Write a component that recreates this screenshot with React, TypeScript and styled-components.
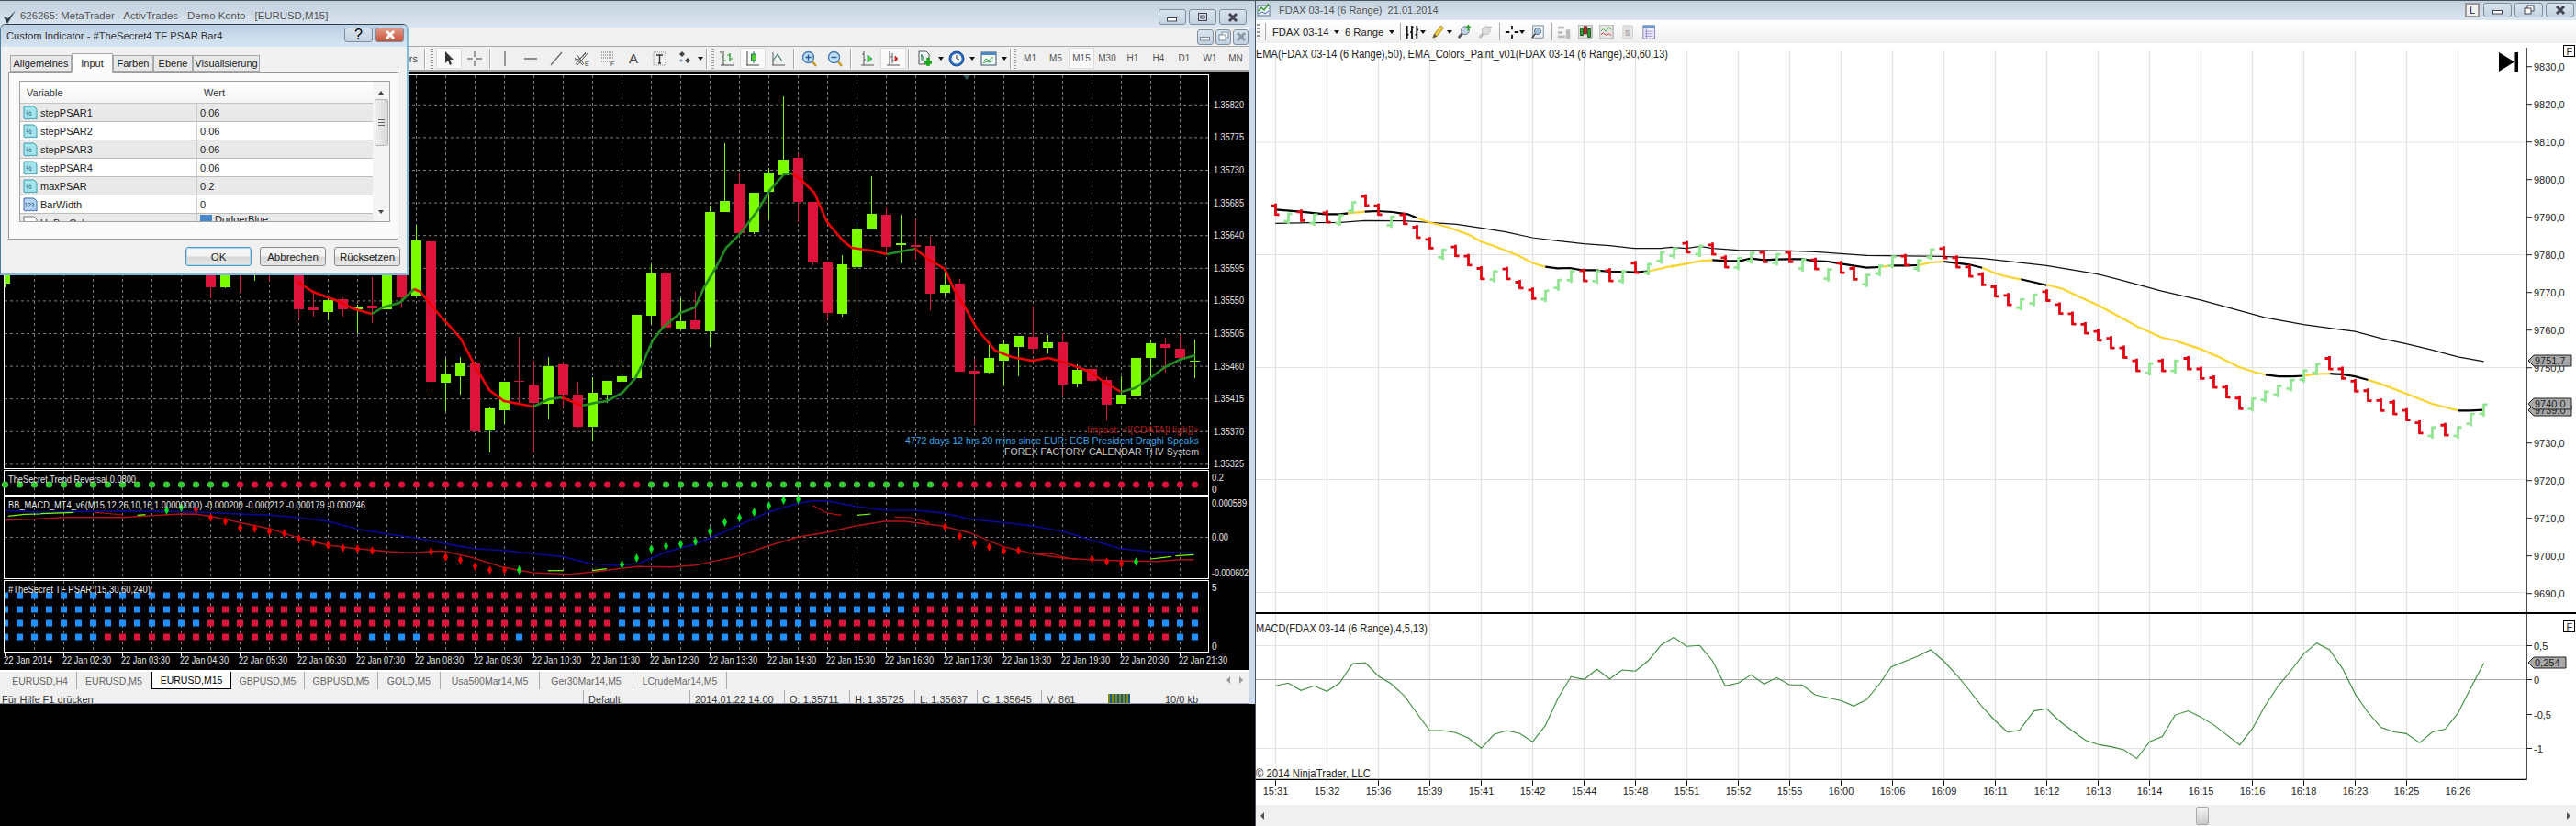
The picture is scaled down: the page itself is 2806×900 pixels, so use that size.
import React from 'react';
import styled, { createGlobalStyle } from 'styled-components';

const GlobalStyle = createGlobalStyle`
  html, body { margin: 0; padding: 0; background: #000; }
  body { font-family: "Liberation Sans", Arial, sans-serif; width: 2806px; height: 900px; overflow: hidden; }
  * { box-sizing: border-box; }
`;

type Pt = [number, number];

// point lists were read off crops of the chart, so they are rescaled to page pixels here
const fromCrop = (pts: number[][], x0: number, y0: number, sx: number, sy: number): Pt[] =>
  pts.map(([x, y]) => [x0 + x / sx, y0 + y / sy]);
const toPoints = (pts: Pt[]) => pts.map(([x, y]) => `${x.toFixed(1)},${y.toFixed(1)}`).join(' ');

/* ---------- layout ---------- */

const Page = styled.div`
  display: flex;
  width: 2806px;
  height: 900px;
  background: #000;
`;

const LeftColumn = styled.div`
  position: relative;
  width: 1367px;
  height: 900px;
  flex: none;
`;

const MetaWindow = styled.div`
  display: flex;
  flex-direction: column;
  height: 767px;
  overflow: hidden;
`;

const TitleBar = styled.div<{ $h: number }>`
  display: flex;
  flex: none;
  height: ${(p) => p.$h}px;
  align-items: flex-start;
  border-top: 1px solid #46525e;
  background: linear-gradient(#c2d0de, #dbe6f0);
`;

const TitleText = styled.span`
  color: #555;
  white-space: pre;
`;

const MetaTitle = styled(TitleText)`
  margin: 10px auto 0 4px;
  font-size: 11.4px;
`;

const NinjaTitle = styled(TitleText)`
  margin: 4px auto 0 9px;
  font-size: 11px;
`;

const AppIcon = styled.svg<{ $m: string }>`
  flex: none;
  margin: ${(p) => p.$m};
`;

const CaptionRow = styled.div<{ $m: string }>`
  display: flex;
  gap: 3px;
  margin: ${(p) => p.$m};
`;

const CaptionButton = styled.div<{ $w: number; $h: number; $c?: string }>`
  display: flex;
  width: ${(p) => p.$w}px;
  height: ${(p) => p.$h}px;
  align-items: center;
  justify-content: center;
  border: 1px solid #7f8e9e;
  border-radius: 3px;
  background: ${(p) => p.$c || 'linear-gradient(#d8e3ee, #c3d2e0)'};
`;

const LockBox = styled.div`
  display: flex;
  width: 16px;
  height: 16px;
  margin-right: 1px;
  align-items: center;
  justify-content: center;
  border: 2px solid #999;
  background: #f0f0f0;
  color: #222;
  font-size: 11px;
`;

const MetaBody = styled.div`
  display: flex;
  flex: 1;
  min-height: 0;
  flex-direction: column;
  border-right: 7px solid #cddcec;
`;

const MenuRow = styled.div`
  display: flex;
  flex: none;
  height: 21px;
  justify-content: flex-end;
  align-items: center;
  gap: 2px;
  background: #f0f0f0;
  border-bottom: 1px solid #a8a8a8;
`;

const MetaToolbar = styled.div`
  display: flex;
  flex: none;
  height: 27px;
  align-items: center;
  padding-left: 398px;
  background: #f0f0f0;
  border-bottom: 2px solid #a0a0a0;
`;

const CutLabel = styled.span`
  width: 60px;
  color: #444;
  font-size: 11px;
  text-align: right;
`;

const ToolSep = styled.i<{ $ml?: number; $mr?: number }>`
  flex: none;
  width: 2px;
  height: 22px;
  margin: 0 ${(p) => p.$mr ?? 1}px 0 ${(p) => p.$ml ?? 2}px;
  border-left: 1px solid #a8a8a8;
  border-right: 1px solid #fff;
`;

const Grip = styled.i<{ $ml?: number; $mr?: number }>`
  flex: none;
  width: 3px;
  height: 22px;
  margin: 0 ${(p) => p.$mr ?? 3}px 0 ${(p) => p.$ml ?? 3}px;
  background: repeating-linear-gradient(#999 0 1px, transparent 1px 3px);
`;

const ToolButton = styled.div<{ $on?: boolean; $w?: number }>`
  display: flex;
  flex: none;
  width: ${(p) => p.$w ?? 28}px;
  height: 23px;
  align-items: center;
  justify-content: center;
  border: 1px solid ${(p) => (p.$on ? '#ddd' : 'transparent')};
  background: ${(p) => (p.$on ? '#fafafa' : 'transparent')};
`;

const Timeframe = styled(ToolButton)`
  color: #555;
  font-size: 10px;
`;

const LetterTool = styled.span`
  color: #444;
  font-size: 15px;
`;

const Caret = styled.i<{ $ml?: number }>`
  flex: none;
  width: 0;
  height: 0;
  margin-left: ${(p) => p.$ml ?? 0}px;
  border-top: 4px solid #111;
  border-left: 3.5px solid transparent;
  border-right: 3.5px solid transparent;
`;

/* ---------- MetaTrader chart ---------- */

const ChartArea = styled.div`
  display: flex;
  flex: none;
  height: 652px;
  flex-direction: column;
  padding: 3px 0 0 4px;
  background: #000;
  overflow: hidden;
`;

const PaneFrame = styled.div<{ $h: number; $mt?: number }>`
  flex: none;
  width: 1313px;
  height: ${(p) => p.$h}px;
  margin-top: ${(p) => p.$mt ?? 0}px;
  border: 1px solid #fff;
`;

const PaneSvg = styled.svg`
  display: block;
  overflow: visible;
`;

const AxisSvg = styled.svg`
  display: block;
  flex: none;
`;

const ScaleText = styled.text.attrs({ lengthAdjust: 'spacingAndGlyphs' })`
  fill: #e8e8e8;
  font-family: "Liberation Sans", Arial, sans-serif;
  font-size: 10px;
`;

const PaneLabel = styled(ScaleText)`
  font-size: 11px;
`;

const NewsText = styled.text.attrs({ lengthAdjust: 'spacingAndGlyphs', textAnchor: 'end' })<{ $c: string }>`
  fill: ${(p) => p.$c};
  font-family: "Liberation Sans", Arial, sans-serif;
  font-size: 11.5px;
`;

/* ---------- symbol tabs + status bar ---------- */

const TabRow = styled.div`
  display: flex;
  flex: none;
  height: 22px;
  padding-left: 4px;
  align-items: flex-start;
  border-top: 2px solid #fff;
  background: #f0f0f0;
`;

const SymbolTab = styled.div<{ $w: number; $on?: boolean }>`
  display: flex;
  flex: none;
  width: ${(p) => p.$w}px;
  height: 19px;
  align-items: center;
  justify-content: center;
  color: ${(p) => (p.$on ? '#000' : '#666')};
  font-size: 10.5px;
  background: ${(p) => (p.$on ? '#fff' : 'transparent')};
  border-right: 1px solid ${(p) => (p.$on ? '#000' : '#aaa')};
  border-left: ${(p) => (p.$on ? '1px solid #000' : '0')};
  border-bottom: ${(p) => (p.$on ? '1px solid #000' : '0')};
`;

const TabArrows = styled.div`
  display: flex;
  gap: 10px;
  margin: 5px 6px 0 auto;
`;

const TabArrow = styled.i<{ $left?: boolean }>`
  width: 0;
  height: 0;
  border-top: 4px solid transparent;
  border-bottom: 4px solid transparent;
  ${(p) => (p.$left ? 'border-right: 4px solid #999;' : 'border-left: 4px solid #999;')}
`;

const StatusBar = styled.div`
  display: flex;
  flex: 1;
  min-height: 0;
  background: #f0f0f0;
  border-bottom: 1px solid #8a96a3;
  overflow: hidden;
`;

const StatusCell = styled.div<{ $w: number; $first?: boolean }>`
  display: flex;
  flex: none;
  width: ${(p) => p.$w}px;
  gap: 38px;
  padding: 4px 0 0 ${(p) => (p.$first ? 2 : 5)}px;
  color: #333;
  font-size: 11px;
  white-space: nowrap;
  border-left: ${(p) => (p.$first ? '0' : '1px solid #aaa')};
`;

const ConnectionBars = styled.i`
  width: 24px;
  height: 10px;
  background: repeating-linear-gradient(90deg, #7d8b1d 0 2px, #1d5b7d 2px 4px);
`;

/* ---------- indicator dialog ---------- */

const Dialog = styled.div`
  position: absolute;
  left: 0;
  top: 26px;
  display: flex;
  width: 445px;
  height: 274px;
  flex-direction: column;
  border: 1px solid #4f7c9c;
  border-top-color: #2d3e4d;
  border-bottom: 2px solid #7fbad8;
  border-right: 2px solid #7fbad8;
  border-radius: 6px 6px 0 0;
  background: #f0f0f0;
  overflow: hidden;
`;

const DialogTitle = styled.div`
  display: flex;
  flex: none;
  height: 24px;
  align-items: flex-start;
  padding: 3px 3px 0 6px;
  background: linear-gradient(#bcd0e4, #d7e5f1);
`;

const DialogTitleText = styled.span`
  margin: 3px auto 0 0;
  color: #333;
  font-size: 11.2px;
`;

const TabStrip = styled.div`
  display: flex;
  flex: none;
  height: 27px;
  padding: 7px 0 0 10px;
  align-items: flex-end;
`;

const DialogTab = styled.div<{ $w: number; $on?: boolean }>`
  display: flex;
  flex: none;
  width: ${(p) => p.$w}px;
  height: ${(p) => (p.$on ? 21 : 18)}px;
  margin-bottom: ${(p) => (p.$on ? -1 : 0)}px;
  align-items: center;
  justify-content: center;
  color: #222;
  font-size: 11px;
  background: ${(p) => (p.$on ? '#fbfbfb' : '#e8e8e8')};
  border: 1px solid #a8a8a8;
  border-bottom-color: ${(p) => (p.$on ? '#fbfbfb' : '#a8a8a8')};
  z-index: ${(p) => (p.$on ? 1 : 0)};
`;

const TabPanel = styled.div`
  flex: none;
  width: 425px;
  height: 183px;
  margin-left: 8px;
  padding: 9px 8px 0 11px;
  background: #fafafa;
  border: 1px solid #9a9a9a;
`;

const ListBox = styled.div`
  position: relative;
  width: 404px;
  height: 154px;
  background: #fff;
  border: 1px solid #a0a0a0;
  overflow: hidden;
`;

const ListHeader = styled.div`
  display: flex;
  height: 24px;
  align-items: center;
  color: #333;
  font-size: 11px;
  background: linear-gradient(#fff, #f4f4f4);
  border-bottom: 1px solid #c4c4c4;
`;

const HeaderCell = styled.span<{ $w?: number }>`
  width: ${(p) => p.$w ?? 180}px;
  padding-left: 7px;
`;

const ListRow = styled.div<{ $alt?: boolean }>`
  display: flex;
  height: 20px;
  width: 385px;
  align-items: center;
  color: #222;
  font-size: 11px;
  background: ${(p) => (p.$alt ? '#e9e9e9' : '#fff')};
  border-bottom: 1px solid #bdbdbd;
`;

const CutRow = styled(ListRow)`
  align-items: flex-start;
  padding-top: 0;
`;

const VarCell = styled.div`
  display: flex;
  width: 193px;
  height: 100%;
  align-items: center;
  gap: 3px;
  padding-left: 3px;
  border-right: 1px solid #ccc;
`;

const ValueCell = styled.div`
  display: flex;
  align-items: center;
  gap: 3px;
  padding-left: 3px;
`;

const Swatch = styled.i`
  width: 13px;
  height: 10px;
  background: #4a86c8;
`;

const ScrollTrack = styled.div`
  position: absolute;
  right: 0;
  top: 0;
  display: flex;
  width: 18px;
  height: 100%;
  flex-direction: column;
  align-items: center;
  background: #f4f4f4;
`;

const ScrollUp = styled.i`
  margin-top: 10px;
  border-bottom: 4px solid #444;
  border-left: 3.5px solid transparent;
  border-right: 3.5px solid transparent;
`;

const ScrollThumb = styled.div`
  display: flex;
  width: 15px;
  height: 51px;
  margin-top: 5px;
  align-items: center;
  justify-content: center;
  background: linear-gradient(90deg, #eee, #d8d8d8);
  border: 1px solid #b4b4b4;
  border-radius: 2px;
`;

const ThumbLines = styled.i`
  width: 7px;
  height: 7px;
  background: repeating-linear-gradient(#666 0 1px, transparent 1px 3px);
`;

const ScrollDown = styled.i`
  margin-top: auto;
  margin-bottom: 8px;
  border-top: 4px solid #444;
  border-left: 3.5px solid transparent;
  border-right: 3.5px solid transparent;
`;

const DialogActions = styled.div`
  display: flex;
  justify-content: flex-end;
  gap: 9px;
  margin-top: 8px;
  padding-right: 7px;
`;

const DialogButton = styled.div<{ $primary?: boolean }>`
  display: flex;
  width: 72px;
  height: 21px;
  align-items: center;
  justify-content: center;
  color: #222;
  font-size: 11.5px;
  border: 1px solid ${(p) => (p.$primary ? '#4a9ac8' : '#8a8a8a')};
  box-shadow: ${(p) => (p.$primary ? 'inset 0 0 0 1px #a9dcf2' : 'none')};
  border-radius: 3px;
  background: linear-gradient(#f4f4f4 45%, #d8d8d8 55%, #e6e6e6);
`;

/* ---------- NinjaTrader window ---------- */

const NinjaWindow = styled.div`
  display: flex;
  flex: none;
  width: 1439px;
  height: 900px;
  flex-direction: column;
  background: #fff;
  border-left: 1px solid #48525c;
`;

const NinjaToolbar = styled.div`
  display: flex;
  flex: none;
  height: 25px;
  align-items: center;
  background: linear-gradient(#fff, #eeeeee);
`;

const Slot = styled.div<{ $ml: number; $w: number }>`
  display: flex;
  flex: none;
  width: ${(p) => p.$w}px;
  margin-left: ${(p) => p.$ml}px;
  align-items: center;
  color: #222;
  font-size: 11.2px;
  white-space: nowrap;
`;

const ThinSep = styled(Slot)`
  height: 19px;
  background: #aaa;
`;

const SmallGrip = styled(Slot)`
  height: 17px;
  background: repeating-linear-gradient(#999 0 2px, transparent 2px 4px);
`;

const NinjaPane = styled.div<{ $h: number; $top?: boolean }>`
  flex: none;
  height: ${(p) => p.$h}px;
  border-top: ${(p) => (p.$top ? '2px solid #000' : '0')};
`;

const NinjaSvg = styled.svg`
  display: block;
`;

const ScrollBar = styled.div`
  display: flex;
  flex: 1;
  align-items: center;
  background: #f0f0f0;
`;

const BarArrow = styled.i<{ $left?: boolean }>`
  width: 0;
  height: 0;
  margin: ${(p) => (p.$left ? '0 0 0 5px' : '0 6px 0 0')};
  border-top: 4px solid transparent;
  border-bottom: 4px solid transparent;
  ${(p) => (p.$left ? 'border-right: 4px solid #555;' : 'border-left: 4px solid #555;')}
`;

const BarThumb = styled.div`
  width: 14px;
  height: 20px;
  margin: 0 auto 0 1015px;
  background: linear-gradient(#f2f2f2, #c8c8c8);
  border: 1px solid #aaa;
  border-radius: 2px;
`;

const NinjaText = styled.text`
  fill: #222;
  font-family: "Liberation Sans", Arial, sans-serif;
  font-size: 11px;
`;

const NinjaLabel = styled(NinjaText).attrs({ lengthAdjust: 'spacingAndGlyphs' })`
  font-size: 12px;
`;

/* ---------- candle chart data ---------- */

const candleX = (k: number) => 5.5 + 16 * k;

// k, wick top, body top, body bottom, wick bottom, bull?
const candles: [number, number, number, number, number, number][] = [
  [0, 290, 290, 309, 313, 1], [14, 290, 290, 313, 325, 0], [15, 290, 290, 313, 314, 1], [16, 290, 290, 291, 318, 0],
  [17, 290, 290, 291, 306, 1], [18, 290, 290, 291, 306, 0], [20, 290, 290, 337, 347, 0], [21, 318, 335, 338, 345, 0],
  [22, 322, 327, 340, 349, 1], [23, 324, 326, 337, 345, 0], [24, 332, 334, 337, 363, 1], [25, 302, 333, 336, 352, 0],
  [26, 290, 290, 337, 337, 1], [27, 290, 290, 324, 335, 0], [28, 245, 262, 323, 323, 1], [29, 263, 263, 416, 427, 0],
  [30, 391, 408, 417, 448, 1], [31, 389, 396, 410, 430, 1], [32, 396, 396, 470, 470, 0], [33, 443, 445, 469, 493, 1],
  [34, 416, 416, 447, 462, 1], [35, 367, 415, 416, 440, 0], [36, 393, 420, 439, 492, 0], [37, 389, 399, 440, 457, 1],
  [38, 394, 397, 430, 443, 0], [39, 416, 430, 465, 466, 0], [40, 411, 428, 465, 481, 1], [41, 415, 415, 430, 439, 1],
  [42, 393, 410, 416, 435, 1], [43, 343, 343, 412, 412, 1], [44, 288, 298, 344, 353, 1], [45, 292, 298, 357, 363, 0],
  [46, 325, 350, 358, 359, 1], [47, 318, 349, 359, 360, 0], [48, 224, 231, 361, 378, 1], [49, 156, 219, 231, 231, 1],
  [50, 189, 200, 254, 254, 0], [51, 210, 210, 253, 255, 1], [52, 183, 188, 209, 239, 1], [53, 105, 174, 191, 191, 1],
  [54, 167, 172, 220, 242, 0], [55, 220, 220, 286, 289, 0], [56, 286, 286, 341, 347, 0], [57, 278, 288, 342, 345, 1],
  [58, 242, 250, 291, 345, 1], [59, 192, 233, 250, 250, 1], [60, 226, 234, 269, 277, 0], [61, 234, 265, 267, 287, 1],
  [62, 239, 267, 269, 283, 0], [63, 258, 268, 320, 338, 0], [64, 292, 310, 319, 322, 1], [65, 304, 309, 405, 405, 0],
  [66, 391, 404, 407, 462, 0], [67, 372, 390, 406, 407, 1], [68, 370, 375, 393, 420, 1], [69, 366, 366, 378, 410, 1],
  [70, 334, 367, 380, 386, 0], [71, 365, 373, 379, 385, 1], [72, 363, 373, 419, 432, 0], [73, 397, 403, 418, 422, 1],
  [74, 395, 402, 415, 425, 0], [75, 411, 414, 441, 458, 0], [76, 410, 430, 440, 440, 1], [77, 390, 390, 431, 431, 1],
  [78, 371, 374, 390, 410, 1], [79, 368, 375, 379, 406, 0], [80, 365, 380, 390, 390, 0], [81, 370, 393, 393.5, 412, 1],
];

const BULL = '#7cfc00';
const BEAR = '#dc143c';

const maSegments: { c: string; pts: Pt[] }[] = [
  { c: '#f00000', pts: [[324, 307], [341, 318], [368, 328], [384, 336], [405, 342]] },
  { c: '#228b22', pts: [[405, 342], [417, 335], [435, 330], [451, 315]] },
  { c: '#f00000', pts: [[451, 315], [458, 318], [475, 339], [502, 369], [518, 400], [533, 425], [549, 437], [581, 443]] },
  { c: '#228b22', pts: [[581, 443], [598, 435], [612, 433]] },
  { c: '#f00000', pts: [[612, 433], [634, 442]] },
  {
    c: '#228b22',
    pts: [[634, 442], [648, 439], [661, 437], [678, 428], [692, 412], [700, 396], [711, 371], [722, 357], [741, 341], [757, 335],
      [767, 313], [779, 293], [791, 270], [806, 255], [827, 227], [838, 208], [854, 190], [863, 189]],
  },
  {
    c: '#f00000',
    pts: [[863, 189], [874, 197], [887, 210], [901, 242], [919, 263], [928, 270], [941, 272], [950, 273], [966, 277]],
  },
  { c: '#228b22', pts: [[966, 277], [997, 271]] },
  {
    c: '#f00000',
    pts: [[997, 271], [1012, 283], [1029, 293], [1039, 315], [1053, 338], [1064, 358], [1084, 382], [1102, 389], [1124, 393],
      [1142, 390], [1160, 395], [1187, 405], [1204, 417], [1221, 427]],
  },
  { c: '#228b22', pts: [[1221, 427], [1236, 423], [1253, 412], [1269, 400], [1285, 392], [1302, 387]] },
];

const blueMacd: Pt[] = [
  ...fromCrop([[12, 172], [100, 178], [200, 175], [300, 173], [400, 175], [500, 178], [570, 182], [660, 187], [730, 195], [800, 207],
    [870, 232], [950, 250], [1010, 260], [1080, 278], [1160, 297], [1230, 302], [1300, 313], [1370, 322], [1440, 345], [1500, 351], [1560, 345]], 0, 500, 2.24, 3),
  ...fromCrop([[0, 340], [55, 308], [125, 283], [165, 262], [235, 220], [305, 178], [380, 148], [415, 140], [450, 140], [520, 158], [590, 170],
    [665, 171], [735, 180], [800, 200], [880, 211], [950, 222], [1025, 240], [1095, 268], [1165, 296], [1240, 306], [1345, 310]], 700, 500, 2.24, 3),
];

const redMacd: Pt[] = [
  ...fromCrop([[12, 203], [80, 200], [155, 194], [300, 194], [370, 188], [440, 183], [480, 184], [520, 192], [590, 212], [660, 232], [730, 262], [800, 285],
    [870, 296], [950, 306], [1000, 310], [1080, 304], [1150, 325], [1230, 358], [1300, 375], [1390, 380], [1450, 372], [1520, 360], [1560, 354]], 0, 500, 2.24, 3),
  ...fromCrop([[0, 355], [70, 356], [130, 350], [235, 320], [305, 288], [380, 258], [450, 243], [520, 222], [590, 207], [640, 207], [730, 222], [800, 245],
    [880, 290], [950, 312], [1030, 328], [1100, 333], [1190, 337], [1260, 338], [1300, 333], [1345, 332]], 700, 500, 2.24, 3),
];

// short crossings of the signal lines: crop pts, colour, crop origin
const macdStubs: { c: string; x0: number; pts: number[][] }[] = [
  { c: '#7cfc00', x0: 0, pts: [[20, 190], [60, 184], [100, 183]] },
  { c: '#7cfc00', x0: 0, pts: [[100, 182], [180, 178]] },
  { c: '#7cfc00', x0: 0, pts: [[335, 187], [355, 185]] },
  { c: '#c01010', x0: 0, pts: [[230, 178], [250, 180], [300, 186]] },
  { c: '#7cfc00', x0: 0, pts: [[1337, 368], [1375, 368]] },
  { c: '#7cfc00', x0: 0, pts: [[1445, 368], [1480, 362]] },
  { c: '#c01010', x0: 700, pts: [[415, 155], [450, 180], [485, 187]] },
  { c: '#7cfc00', x0: 700, pts: [[522, 187], [557, 183]] },
  { c: '#c01010', x0: 700, pts: [[615, 193], [655, 195], [700, 212]] },
  { c: '#c01010', x0: 700, pts: [[955, 313], [1000, 313], [1030, 325], [1060, 332]] },
  { c: '#7cfc00', x0: 700, pts: [[1240, 330], [1290, 322]] },
  { c: '#7cfc00', x0: 700, pts: [[1300, 320], [1345, 316]] },
];

// diamond markers: k, page y, up?
const macdMarks: [number, number, number][] = [
  [11, 557, 1], [12, 554, 1], [13, 556, 0], [14, 565, 0], [15, 569, 0], [16, 576, 0], [17, 577, 0], [18, 580, 0], [19, 582, 0], [20, 588, 0],
  [21, 592, 0], [22, 595, 0], [23, 598, 0], [24, 599, 0], [25, 601, 0], [29, 602, 0], [30, 608, 0], [31, 611, 0], [32, 618, 0], [33, 622, 0], [34, 622, 0],
  [35, 622, 1], [42, 616, 1], [43, 609, 1], [44, 599, 1], [45, 596, 1], [46, 594, 1], [47, 591, 1], [48, 580, 1], [49, 570, 1], [50, 565, 1], [51, 559, 1],
  [52, 552, 1], [53, 546, 1], [54, 545, 1], [64, 575, 0], [65, 585, 0], [66, 593, 0], [67, 597, 0], [68, 601, 0], [69, 601, 0], [74, 610, 0], [75, 613, 0],
  [76, 615, 0], [77, 613, 1],
];

const PSAR_BLUE = '#1e90ff';

// colour runs of each PSAR row: [from, to] are the red columns
const psarRows: { y: number; red: [number, number][] }[] = [
  { y: 650, red: [[26, 41]] },
  { y: 665, red: [[14, 41], [62, 81]] },
  { y: 680, red: [[14, 41], [56, 77]] },
  { y: 695, red: [[7, 24], [29, 34], [36, 41], [55, 69], [75, 79]] },
];

const columns = Array.from({ length: 82 }, (_, k) => k);
const mainPrices = ['1.35820', '1.35775', '1.35730', '1.35685', '1.35640', '1.35595', '1.35550', '1.35505', '1.35460', '1.35415', '1.35370', '1.35325'];
const dateLabels = ['22 Jan 2014', ...Array.from({ length: 20 }, (_, i) => `22 Jan ${String(i + 2).padStart(2, '0')}:30`)];

/* ---------- NinjaTrader chart data ---------- */

const barX = (n: number) => 1389.5 + 14 * n;

const barsA: [string, number, number][] = [
  ['r', 65, 105], ['g', 95, 132], ['r', 85, 125], ['g', 98, 138], ['r', 88, 130], ['g', 100, 138], ['g', 58, 98], ['r', 35, 75], ['r', 65, 105], ['g', 105, 145],
  ['r', 95, 135], ['r', 135, 180], ['r', 175, 215], ['g', 213, 250], ['r', 200, 240], ['r', 230, 270], ['r', 270, 315], ['g', 283, 323], ['r', 272, 315], ['r', 315, 345],
  ['r', 340, 380], ['g', 347, 387], ['g', 312, 350], ['g', 283, 325], ['r', 278, 322], ['g', 283, 328], ['r', 277, 322], ['g', 283, 327], ['r', 253, 295], ['g', 260, 300], ['g', 222, 262],
];
const barsB: [string, number, number][] = [
  ['g', 118, 155], ['r', 98, 138], ['g', 110, 150], ['r', 103, 145], ['r', 145, 187], ['g', 150, 193], ['g', 133, 172], ['r', 128, 170], ['g', 138, 178], ['r', 128, 170],
  ['g', 155, 197], ['r', 152, 193], ['g', 187, 230], ['r', 163, 205], ['r', 180, 227], ['g', 205, 248], ['g', 175, 213], ['g', 145, 187], ['r', 140, 180], ['g', 157, 197],
  ['g', 122, 160], ['r', 115, 157], ['r', 145, 187], ['r', 175, 217], ['r', 200, 245], ['r', 240, 282], ['r', 268, 310],
];
const barsC: [string, number, number][] = [
  ['g', 65, 100], ['g', 52, 88], ['r', 40, 75], ['r', 77, 112], ['r', 103, 142], ['r', 133, 168], ['r', 153, 188], ['r', 173, 210], ['r', 200, 237], ['r', 237, 275],
  ['g', 248, 285], ['r', 237, 275], ['g', 240, 280], ['r', 230, 270], ['r', 260, 297], ['r', 285, 322], ['r', 312, 350], ['r', 343, 383], ['g', 348, 388], ['g', 328, 362],
  ['g', 312, 347], ['g', 295, 330], ['g', 268, 305], ['g', 250, 285], ['r', 230, 270], ['r', 260, 297], ['r', 295, 333], ['r', 322, 360], ['r', 350, 388], ['r', 355, 398],
  ['r', 378, 415], ['r', 413, 452], ['g', 430, 465], ['r', 420, 458], ['g', 430, 465], ['g', 392, 430], ['g', 365, 402],
];

const rangeBars = [
  ...barsA.map(([c, t, b]) => [c, 200 + t / 3, 200 + b / 3] as const),
  ...barsB.map(([c, t, b]) => [c, 230 + t / 3, 230 + b / 3] as const),
  ...barsC.map(([c, t, b]) => [c, 300 + t / 2.613, 300 + b / 2.613] as const),
];

const a = (pts: number[][]) => fromCrop(pts, 1360, 200, 3, 3);
const b = (pts: number[][]) => fromCrop(pts, 1820, 230, 3, 3);
const c = (pts: number[][]) => fromCrop(pts, 2200, 300, 2.587, 2.613);

const slowEma: Pt[] = [
  ...a([[88, 130], [200, 128], [300, 127], [380, 121], [508, 122], [592, 127], [680, 133], [760, 145], [840, 158], [928, 177], [1010, 187], [1096, 197], [1180, 203], [1264, 212], [1348, 212]]),
  ...b([[0, 118], [50, 122], [95, 115], [136, 122], [220, 128], [388, 130], [472, 133], [640, 145], [892, 148], [1020, 155], [1228, 178], [1390, 205]]),
  ...c([[290, 15], [400, 45], [510, 70], [690, 120], [800, 140], [945, 160], [1020, 180], [1090, 195], [1160, 212], [1235, 232], [1308, 245]]),
];

const YELLOW = '#fcd32a';
const fastEma: { c: string; pts: Pt[] }[] = [
  { c: '#000', pts: a([[88, 85], [170, 92], [250, 100], [300, 100], [325, 97]]) },
  { c: YELLOW, pts: a([[325, 97], [380, 92]]) },
  { c: '#000', pts: a([[380, 92], [420, 90], [470, 93], [520, 100], [550, 112]]) },
  { c: YELLOW, pts: a([[550, 112], [590, 127], [650, 142], [720, 167], [760, 190], [800, 203], [880, 235], [930, 260], [970, 272]]) },
  { c: '#000', pts: a([[970, 272], [1010, 277], [1050, 276], [1090, 283], [1130, 283], [1180, 288], [1220, 288], [1265, 290], [1305, 287]]) },
  { c: YELLOW, pts: [...a([[1305, 287], [1390, 268]]), ...b([[0, 182], [50, 172], [95, 163], [136, 160]])] },
  { c: '#000', pts: b([[136, 160], [180, 163], [225, 163], [262, 155], [305, 160], [345, 158], [388, 157], [430, 157], [472, 163], [514, 165], [556, 172], [640, 185], [682, 183]]) },
  { c: YELLOW, pts: b([[682, 183], [724, 178]]) },
  { c: '#000', pts: b([[724, 178], [766, 178], [808, 177]]) },
  { c: YELLOW, pts: b([[808, 177], [850, 168], [892, 165]]) },
  { c: '#000', pts: b([[892, 165], [934, 170], [976, 175], [1018, 185]]) },
  { c: YELLOW, pts: b([[1018, 185], [1060, 203], [1102, 215], [1144, 223]]) },
  { c: '#000', pts: b([[1144, 223], [1228, 242]]) },
  { c: YELLOW, pts: c([[76, 27], [120, 38], [170, 62], [220, 85], [280, 117], [330, 145], [400, 177], [435, 185], [510, 210], [560, 232], [620, 262], [660, 275], [693, 283]]) },
  { c: '#000', pts: c([[693, 283], [730, 288], [770, 288], [800, 286]]) },
  { c: YELLOW, pts: c([[800, 286], [840, 281], [875, 280]]) },
  { c: '#000', pts: c([[875, 280], [910, 282], [945, 288], [982, 298]]) },
  { c: YELLOW, pts: c([[982, 298], [1020, 310], [1090, 337], [1160, 365], [1235, 385]]) },
  { c: '#000', pts: c([[1235, 385], [1270, 385], [1305, 383]]) },
];

const macdLine: Pt[] = [
  ...fromCrop([[66, 322], [97, 313], [128, 337], [160, 322], [191, 340], [222, 313], [254, 249], [285, 246], [317, 290], [348, 315], [380, 354], [411, 412], [442, 468], [473, 468], [505, 475], [536, 492],
    [568, 526], [599, 481], [630, 468], [662, 478], [693, 505], [724, 452], [756, 360], [787, 292], [819, 301], [850, 268], [881, 299], [912, 270], [944, 274], [975, 240], [1007, 188], [1038, 163],
    [1069, 193], [1101, 190], [1132, 240], [1163, 322], [1195, 313], [1226, 286], [1258, 316], [1289, 295], [1320, 319], [1351, 319], [1383, 352], [1414, 361], [1445, 370], [1477, 388], [1508, 367], [1540, 315], [1568, 260]], 1360, 640, 2.24, 3),
  [2089, 715], [2103, 708], [2117, 720], [2131, 735], [2145, 752], [2159, 770], [2173, 785], [2187, 798],
  ...c([[0, 1295], [40, 1240], [76, 1234], [113, 1270], [150, 1298], [186, 1324], [222, 1336], [258, 1342], [294, 1351], [330, 1376], [366, 1328], [402, 1313], [438, 1252], [475, 1240], [511, 1258], [547, 1280], [583, 1308],
    [620, 1337], [656, 1290], [692, 1225], [728, 1170], [765, 1125], [800, 1078], [837, 1047], [873, 1066], [910, 1120], [946, 1193], [982, 1245], [1018, 1287], [1055, 1300], [1090, 1305], [1127, 1331], [1163, 1300], [1199, 1292], [1235, 1247], [1271, 1175], [1308, 1104]]),
];

const priceY = (p: number) => 72.7 + (9830 - p) * 4.1;
const priceTicks = [9830, 9820, 9810, 9800, 9790, 9780, 9770, 9760, 9750, 9730, 9720, 9710, 9700, 9690];
const timeLabels = ['15:31', '15:32', '15:36', '15:39', '15:41', '15:42', '15:44', '15:48', '15:51', '15:52', '15:55', '16:00', '16:06', '16:09', '16:11', '16:12', '16:13', '16:14', '16:15', '16:16', '16:18', '16:23', '16:25', '16:26'];
const gridXs = timeLabels.map((_, i) => 1389.5 + 56 * i);
const macdTicks: [string, number][] = [['0,5', 703.5], ['0', 740.5], ['-0,5', 778.5], ['-1', 815.5]];

/* ---------- small drawings ---------- */

const Glyph = ({ name, size = 18 }: { name: string; size?: number }) => {
  const d: Record<string, React.ReactNode> = {
    arrow: <path d="M5 1v13l3-3 2 5 2-1-2-5h4z" fill="#333" />,
    cross: <path d="M9 1v6M9 11v6M1 9h6M11 9h6" stroke="#444" fill="none" />,
    vline: <path d="M9 1v16" stroke="#444" />,
    hline: <path d="M2 9h14" stroke="#444" strokeWidth="1.2" />,
    trend: <path d="M3 16L15 2" stroke="#666" strokeWidth="1.2" />,
    fibE: <g stroke="#555" fill="none"><path d="M2 15L13 2M4 16L15 3M1 10c5 0 9-3 12-7M3 4l8 11M1 8l9 8" /><text x="12" y="17" fontSize="7" fill="#444" stroke="none" fontFamily="Liberation Sans">E</text></g>,
    fibF: <g stroke="#666" fill="none" strokeDasharray="1 1"><path d="M2 2h14M2 5h14M2 8h14M2 12h10" /><text x="12" y="17" fontSize="7" fill="#444" stroke="none" strokeDasharray="0" fontFamily="Liberation Sans">F</text></g>,
    textBox: <g fill="none"><rect x="3" y="2" width="13" height="14" stroke="#888" strokeDasharray="1 1" /><path d="M6 5h7M9.5 5v9M8 14h3" stroke="#333" strokeWidth="1.4" /></g>,
    shapes: <g fill="#444"><path d="M6 1l3 3-3 3-3-3z" /><path d="M12 8l3 3-3 3-3-3z" /><path d="M5 9l2 2-2 2-2-2z" fill="#89a" /></g>,
    barsTool: <g fill="none" stroke="#444"><path d="M5 1v15M2 16h14M2 1v2" /><path d="M12 3v9" stroke="#393" strokeWidth="1.4" /><path d="M9 5h3M12 9h3M3 7h2M5 11h3" stroke="#393" /></g>,
    candle: <g stroke="#444" fill="none"><path d="M2 16h14M3 1v15" /><path d="M10 1v13" stroke="#275" /><rect x="7.5" y="4" width="5" height="7" fill="#5c3" stroke="#275" /></g>,
    line: <g stroke="#555" fill="none"><path d="M2 16h14M3 2v14" /><path d="M3 11l5-7 5 8" stroke="#477" strokeWidth="1.2" /></g>,
    zoomIn: <g fill="none"><path d="M11 11l5 6" stroke="#c89a2a" strokeWidth="2.5" /><circle cx="7.5" cy="7.5" r="6" fill="#bfe0f5" stroke="#4678b0" strokeWidth="1.4" /><path d="M4.5 7.5h6M7.5 4.5v6" stroke="#2458a0" strokeWidth="1.4" /></g>,
    zoomOut: <g fill="none"><path d="M11 11l5 6" stroke="#c89a2a" strokeWidth="2.5" /><circle cx="7.5" cy="7.5" r="6" fill="#bfe0f5" stroke="#4678b0" strokeWidth="1.4" /><path d="M4.5 7.5h6" stroke="#2458a0" strokeWidth="1.4" /></g>,
    autoScroll: <g fill="none" stroke="#555"><path d="M2 16h14M5 1v15M3 4h2M5 10h2" /><path d="M9 5l5 4-5 4z" fill="#5c3" stroke="#2a7" /></g>,
    shift: <g fill="none" stroke="#555"><path d="M2 16h14M5 1v15M8 3v11M8 7H6M8 11h2" /><path d="M11 6l3 3-3 3z" fill="#c33" stroke="#c33" /></g>,
    addIndicator: <g fill="none"><path d="M2 1h8l3 3v11H2z" fill="#eef3f8" stroke="#555" /><path d="M5 4v7M4 6h2M7 6v5M8 8H6" stroke="#274" /><path d="M12 8v9M8 13h8" stroke="#1caa1c" strokeWidth="3.4" /></g>,
    clock: <g fill="none"><circle cx="9" cy="9" r="8" fill="#2a6cc0" stroke="#1c4a90" /><circle cx="9" cy="9" r="5.5" fill="#f6f6f6" /><path d="M9 5v4l3 1" stroke="#333" /></g>,
    template: <g fill="none"><rect x="1" y="2" width="16" height="14" fill="#f4f8fb" stroke="#356" /><rect x="1" y="2" width="16" height="3" fill="#4d86c0" /><path d="M3 12l3-3 3 2 5-4M3 14l4-2 3 1 4-2" stroke="#3a3" /></g>,
    ctrlBars: <path d="M3 1v16M9 1v16M15 1v16M1 5h2M3 12h2M7 9h2M9 3h2M13 12h2M15 6h2" stroke="#111" strokeWidth="2" fill="none" />,
    pencil: <g><path d="M2 16l2-5L12 1l3 3-8 10z" fill="#f3cc3c" stroke="#a08224" /><path d="M2 16l2-5 3 3z" fill="#555" /></g>,
    zoomPlus: <g fill="none"><path d="M7 10l-5 6" stroke="#556" strokeWidth="3" /><circle cx="10" cy="7" r="5" fill="#bfd3e2" stroke="#678" /><path d="M14 0v7M11 3h6" stroke="#1a9a1a" strokeWidth="2" /></g>,
    zoomGrey: <g fill="none"><path d="M7 10l-5 6" stroke="#bbb" strokeWidth="3" /><circle cx="10" cy="7" r="5" fill="#ddd" stroke="#bbb" /><path d="M11 3h6" stroke="#bbb" strokeWidth="2" /></g>,
    crossBlack: <path d="M9 1v5M9 12v5M1 9h5M12 9h5" stroke="#111" strokeWidth="2" fill="none" />,
    pageZoom: <g fill="none"><rect x="3" y="1" width="13" height="15" fill="#eef2f6" stroke="#789" /><circle cx="9" cy="8" r="4" fill="#9cc0dc" stroke="#567" /><path d="M6 11l-4 5" stroke="#445" strokeWidth="2" /></g>,
    greyBars: <g fill="#bbb"><rect x="1" y="2" width="8" height="3" /><rect x="1" y="8" width="6" height="3" /><rect x="1" y="13" width="9" height="3" /><rect x="11" y="6" width="5" height="11" /></g>,
    candles: <g><rect width="17" height="17" fill="#dcdcdc" stroke="#999" /><rect x="3" y="4" width="3" height="9" fill="#3a3" stroke="#141" /><rect x="7.5" y="2" width="3" height="9" fill="#d33" stroke="#611" /><rect x="12" y="5" width="3" height="10" fill="#3a3" stroke="#141" /></g>,
    lineChart: <g fill="none"><rect width="17" height="17" fill="#e4e4e4" stroke="#999" /><path d="M2 8l3-3 3 3 4-5 3 3" stroke="#2a2" /><path d="M2 12l3-2 4 3 3-2 3 2" stroke="#c33" /></g>,
    dollar: <g><rect x="1" y="1" width="12" height="16" rx="1" fill="#e4e4e4" stroke="#ccc" /><text x="3.5" y="13" fontSize="11" fontWeight="700" fill="#aaa" fontFamily="Liberation Sans">$</text></g>,
    table: <g fill="none"><rect x="1" y="1" width="14" height="16" fill="#f0f0ff" stroke="#77a" /><rect x="1" y="1" width="14" height="3" fill="#69c" /><path d="M5 4v13M3 8h10M3 11h10M3 14h10" stroke="#98c" /></g>,
  };
  return (
    <svg width={size} height={size} viewBox="0 0 18 18">
      {d[name]}
    </svg>
  );
};

const CaptionGlyph = ({ kind, dark = '#445' }: { kind: 'min' | 'max' | 'restore' | 'close'; dark?: string }) => (
  <svg width="14" height="12" viewBox="0 0 14 12">
    {kind === 'min' && <rect x="1.5" y="6.5" width="10" height="3.5" fill="#fff" stroke={dark} />}
    {kind === 'max' && <g fill="none" stroke={dark}><rect x="2.5" y="1.5" width="9" height="8" /><rect x="5" y="4" width="4" height="3" fill="#fff" /></g>}
    {kind === 'restore' && <g fill="#fff" stroke={dark}><rect x="5" y="1" width="7" height="6" /><rect x="2" y="4" width="7" height="6" /></g>}
    {kind === 'close' && <path d="M3 2l8 8M11 2l-8 8" stroke={dark} strokeWidth="3" />}
  </svg>
);

const DocIcon = ({ kind }: { kind: 'half' | 'int' | 'plain' }) => (
  <svg width="16" height="16" viewBox="0 0 16 16">
    <path d="M1 1h11l3 3v11l-2-1-2 1-2-1-2 1-2-1-2 1-2-1z"
      fill={kind === 'half' ? '#a5e4ec' : kind === 'int' ? '#b7d3f2' : '#fff'}
      stroke={kind === 'half' ? '#3a9aaa' : kind === 'int' ? '#3a6aaa' : '#777'} />
    {kind !== 'plain' && (
      <text x={kind === 'half' ? 3 : 1.6} y="11" fontSize={kind === 'half' ? 8 : 6.5} fill="#1b5a7a" fontFamily="Liberation Sans">
        {kind === 'half' ? '½' : '123'}
      </text>
    )}
  </svg>
);

const GridV = ({ y1, y2 }: { y1: number; y2: number }) => (
  <g stroke="#808080" strokeDasharray="3 3">
    {Array.from({ length: 40 }, (_, i) => (
      <line key={i} x1={37.5 + 32 * i} x2={37.5 + 32 * i} y1={y1} y2={y2} />
    ))}
  </g>
);

const Diamond = ({ x, y, up }: { x: number; y: number; up: boolean }) => (
  <path d={`M${x} ${y - 5}l2.5 5-2.5 5-2.5-5z`} fill={up ? '#00e020' : '#ee0000'} />
);

const PriceTag = ({ x, y, w, text }: { x: number; y: number; w: number; text: string }) => (
  <g>
    <path d={`M${x} ${y}l6-6h${w}v12h-${w}z`} fill="#a8a8a8" stroke="#222" />
    <NinjaText x={x + 7} y={y + 4}>{text}</NinjaText>
  </g>
);

/* ---------- panes ---------- */

const MainPane = () => (
  <PaneFrame $h={430}>
    <PaneSvg width={1311} height={428} viewBox="5 82 1311 428">
      <GridV y1={82} y2={510} />
      <g stroke="#808080" strokeDasharray="3 3">
        {mainPrices.map((_, i) => {
          const y = 114.3 + i * 35.6;
          return <line key={i} x1={5} x2={1316} y1={y} y2={y} />;
        })}
      </g>
      {candles.map(([k, wt, bt, bb, wb, bull]) => {
        const x = candleX(k);
        const col = bull ? BULL : BEAR;
        const left = Math.max(5, x - 5.5);
        return (
          <g key={k} fill={col}>
            <rect x={x - 0.5} y={wt} width={1} height={wb - wt} />
            <rect x={left} y={bt} width={x + 5.5 - left} height={Math.max(bb - bt, 1)} />
          </g>
        );
      })}
      {maSegments.map((s, i) => (
        <polyline key={i} points={toPoints(s.pts)} fill="none" stroke={s.c} strokeWidth={2.6} />
      ))}
      <path d="M1049 82h8l-4 5z" fill="#2f5050" />
      <NewsText x={1306} y={472} $c="#a81818" textLength={122} >{'Impact: <![CDATA[High]]>'}</NewsText>
      <NewsText x={1306} y={484} $c="#38a4e8" textLength={320}>4772 days 12 hrs 20 mins since EUR: ECB President Draghi Speaks</NewsText>
      <NewsText x={1306} y={496} $c="#c8c8c8" textLength={212}>FOREX FACTORY CALENDAR THV System</NewsText>
      {mainPrices.map((p, i) => (
        <ScaleText key={p} x={1322} y={117.8 + i * 35.6} textLength={33}>{p}</ScaleText>
      ))}
    </PaneSvg>
  </PaneFrame>
);

const TrendPane = () => (
  <PaneFrame $h={28} $mt={1}>
    <PaneSvg width={1311} height={26} viewBox="5 513 1311 26">
      <GridV y1={513} y2={539} />
      {columns.map((k) => (
        <circle key={k} cx={candleX(k)} cy={528} r={3.6} fill={k < 16 || (k >= 44 && k < 64) ? '#32cd32' : BEAR} />
      ))}
      <PaneLabel x={9} y={526} textLength={139}>TheSecret Trend Reversal 0.0800</PaneLabel>
      <ScaleText x={1320} y={524} textLength={13}>0.2</ScaleText>
      <ScaleText x={1320} y={537}>0</ScaleText>
    </PaneSvg>
  </PaneFrame>
);

const MacdPane = () => (
  <PaneFrame $h={91}>
    <PaneSvg width={1311} height={89} viewBox="5 542 1311 89">
      <GridV y1={542} y2={631} />
      <line x1={5} x2={1316} y1={586.5} y2={586.5} stroke="#808080" strokeDasharray="3 3" />
      <polyline points={toPoints(blueMacd)} fill="none" stroke="#0a0a9a" strokeWidth={1.6} />
      <polyline points={toPoints(redMacd)} fill="none" stroke="#b01414" strokeWidth={1.4} />
      {macdStubs.map((s, i) => (
        <polyline key={i} points={toPoints(fromCrop(s.pts, s.x0, 500, 2.24, 3))} fill="none" stroke={s.c} strokeWidth={1.2} />
      ))}
      {macdMarks.map(([k, y, up]) => (
        <Diamond key={k} x={candleX(k)} y={y} up={!!up} />
      ))}
      <PaneLabel x={9} y={555} textLength={389}>BB_MACD_MT4_v6(M15,12,26,10,16,1.00000000) -0.000200 -0.000212 -0.000179 -0.000246</PaneLabel>
      <ScaleText x={1320} y={553} textLength={38}>0.000589</ScaleText>
      <ScaleText x={1320} y={590} textLength={18}>0.00</ScaleText>
      <ScaleText x={1320} y={629} textLength={40}>-0.000602</ScaleText>
    </PaneSvg>
  </PaneFrame>
);

const PsarPane = () => (
  <PaneFrame $h={79} $mt={1}>
    <PaneSvg width={1311} height={77} viewBox="5 634 1311 77">
      <GridV y1={634} y2={711} />
      {psarRows.map((row) =>
        columns.map((k) => {
          const isRed = row.red.some(([from, to]) => k >= from && k <= to);
          const left = Math.max(5, candleX(k) - 3.5);
          return (
            <rect key={`${row.y}-${k}`} x={left} y={row.y - 3.5} width={candleX(k) + 3.5 - left} height={7} fill={isRed ? BEAR : PSAR_BLUE} />
          );
        }),
      )}
      <PaneLabel x={9} y={647} textLength={155}>#TheSecret TF PSAR (15,30,60,240)</PaneLabel>
      <ScaleText x={1320} y={645}>5</ScaleText>
      <ScaleText x={1320} y={709}>0</ScaleText>
    </PaneSvg>
  </PaneFrame>
);

const DateAxis = () => (
  <AxisSvg width={1356} height={18} viewBox="4 712 1356 18">
    {dateLabels.map((d, i) => (
      <g key={d}>
        <line x1={5.5 + 64 * i} x2={5.5 + 64 * i} y1={712} y2={716} stroke="#fff" />
        <ScaleText x={4 + 64 * i} y={724} textLength={53}>{d}</ScaleText>
      </g>
    ))}
  </AxisSvg>
);

const NinjaMain = () => (
  <NinjaPane $h={620}>
    <NinjaSvg width={1438} height={620} viewBox="1368 47 1438 620">
      <g stroke="#e2e2e2" strokeWidth={1.2}>
        {gridXs.map((x) => <line key={x} x1={x} x2={x} y1={55} y2={667} />)}
        {[155, 277.5, 400.5, 522.5, 645.5].map((y) => <line key={y} x1={1368} x2={2752} y1={y} y2={y} />)}
      </g>
      <NinjaLabel x={1368} y={63} textLength={449}>EMA(FDAX 03-14 (6 Range),50), EMA_Colors_Paint_v01(FDAX 03-14 (6 Range),30,60,13)</NinjaLabel>
      <polyline points={toPoints(slowEma)} fill="none" stroke="#111" strokeWidth={1.2} />
      {fastEma.map((s, i) => (
        <polyline key={i} points={toPoints(s.pts)} fill="none" stroke={s.c} strokeWidth={2.2} />
      ))}
      {rangeBars.map(([col, top, bot], n) => {
        const x = barX(n);
        const red = col === 'r';
        const d = red
          ? `M${x} ${top}V${bot}M${x - 5} ${top + 2.5}H${x}M${x} ${bot - 1.2}H${x + 4}`
          : `M${x} ${top}V${bot}M${x - 5} ${bot - 3}H${x}M${x} ${top + 1.2}H${x + 4}`;
        return <path key={n} d={d} fill="none" stroke={red ? '#e4000f' : '#92e692'} strokeWidth={2.8} />;
      })}
      <path d="M2722 57l17 10.5-17 10.5zM2739.5 57h3.5v21h-3.5z" fill="#000" />
      <line x1={2752} x2={2752} y1={52} y2={667} stroke="#000" strokeWidth={1.4} />
      {priceTicks.map((p) => (
        <g key={p}>
          <line x1={2752} x2={2758} y1={priceY(p)} y2={priceY(p)} stroke="#222" />
          <NinjaText x={2760} y={priceY(p) + 4}>{p.toFixed(1).replace('.', ',')}</NinjaText>
        </g>
      ))}
      <PriceTag x={2754} y={393} w={41} text="9751,7" />
      <PriceTag x={2754} y={447} w={41} text="9739,0" />
      <PriceTag x={2754} y={440} w={41} text="9740,0" />
      <rect x={2792.5} y={49.5} width={12} height={12} fill="#fff" stroke="#000" />
      <NinjaText x={2795.5} y={59.5} fontSize={10}>F</NinjaText>
    </NinjaSvg>
  </NinjaPane>
);

const NinjaMacd = () => (
  <NinjaPane $h={183} $top>
    <NinjaSvg width={1438} height={181} viewBox="1368 669 1438 181">
      <g stroke="#e2e2e2" strokeWidth={1.2}>
        {gridXs.map((x) => <line key={x} x1={x} x2={x} y1={669} y2={849} />)}
        <line x1={1368} x2={2752} y1={703.5} y2={703.5} />
        <line x1={1368} x2={2752} y1={815.5} y2={815.5} />
      </g>
      <line x1={1368} x2={2752} y1={740.5} y2={740.5} stroke="#a8a8a8" />
      <NinjaLabel x={1368} y={689} textLength={187}>MACD(FDAX 03-14 (6 Range),4,5,13)</NinjaLabel>
      <NinjaLabel x={1368} y={847} textLength={125}>© 2014 NinjaTrader, LLC</NinjaLabel>
      <polyline points={toPoints(macdLine)} fill="none" stroke="#3c8c3c" strokeWidth={1.1} />
      <line x1={2752} x2={2752} y1={669} y2={850} stroke="#000" strokeWidth={1.4} />
      <line x1={1368} x2={2752} y1={849.5} y2={849.5} stroke="#000" strokeWidth={1.4} />
      {macdTicks.map(([t, y]) => (
        <g key={t}>
          <line x1={2752} x2={2758} y1={y} y2={y} stroke="#222" />
          <NinjaText x={2760} y={y + 4}>{t}</NinjaText>
        </g>
      ))}
      <PriceTag x={2754} y={722} w={35} text="0,254" />
      <rect x={2792.5} y={676.5} width={12} height={12} fill="#fff" stroke="#000" />
      <NinjaText x={2795.5} y={686.5} fontSize={10}>F</NinjaText>
    </NinjaSvg>
  </NinjaPane>
);

const NinjaTimeAxis = () => (
  <NinjaPane $h={27}>
    <NinjaSvg width={1438} height={27} viewBox="1368 850 1438 27">
      {timeLabels.map((t, i) => (
        <g key={t}>
          <line x1={gridXs[i]} x2={gridXs[i]} y1={850} y2={856} stroke="#222" />
          <NinjaText x={gridXs[i]} y={866} textAnchor="middle">{t}</NinjaText>
        </g>
      ))}
    </NinjaSvg>
  </NinjaPane>
);

/* ---------- windows ---------- */

const listRows: [string, string, 'half' | 'int'][] = [
  ['stepPSAR1', '0.06', 'half'],
  ['stepPSAR2', '0.06', 'half'],
  ['stepPSAR3', '0.06', 'half'],
  ['stepPSAR4', '0.06', 'half'],
  ['maxPSAR', '0.2', 'half'],
  ['BarWidth', '0', 'int'],
];

const IndicatorDialog = () => (
  <Dialog>
    <DialogTitle>
      <DialogTitleText>Custom Indicator - #TheSecret4 TF PSAR Bar4</DialogTitleText>
      <CaptionRow $m="0">
        <CaptionButton $w={31} $h={16}>?</CaptionButton>
        <CaptionButton $w={31} $h={16} $c="linear-gradient(#e39a86, #c8503a)">
          <CaptionGlyph kind="close" dark="#fff" />
        </CaptionButton>
      </CaptionRow>
    </DialogTitle>
    <TabStrip>
      <DialogTab $w={67}>Allgemeines</DialogTab>
      <DialogTab $w={45} $on>Input</DialogTab>
      <DialogTab $w={44}>Farben</DialogTab>
      <DialogTab $w={43}>Ebene</DialogTab>
      <DialogTab $w={73}>Visualisierung</DialogTab>
    </TabStrip>
    <TabPanel>
      <ListBox>
        <ListHeader>
          <HeaderCell $w={193}>Variable</HeaderCell>
          <HeaderCell>Wert</HeaderCell>
        </ListHeader>
        {listRows.map(([name, value, kind], i) => (
          <ListRow key={name} $alt={i % 2 === 0}>
            <VarCell><DocIcon kind={kind} />{name}</VarCell>
            <ValueCell>{value}</ValueCell>
          </ListRow>
        ))}
        <CutRow $alt>
          <VarCell><DocIcon kind="plain" />UpBarColor</VarCell>
          <ValueCell><Swatch />DodgerBlue</ValueCell>
        </CutRow>
        <ScrollTrack>
          <ScrollUp />
          <ScrollThumb><ThumbLines /></ScrollThumb>
          <ScrollDown />
        </ScrollTrack>
      </ListBox>
    </TabPanel>
    <DialogActions>
      <DialogButton $primary>OK</DialogButton>
      <DialogButton>Abbrechen</DialogButton>
      <DialogButton>Rücksetzen</DialogButton>
    </DialogActions>
  </Dialog>
);

const timeframes = ['M1', 'M5', 'M15', 'M30', 'H1', 'H4', 'D1', 'W1', 'MN'];
const symbolTabs: [string, number, boolean?][] = [
  ['EURUSD,H4', 80], ['EURUSD,M5', 81], ['EURUSD,M15', 87, true], ['GBPUSD,M5', 80], ['GBPUSD,M5', 80], ['GOLD,M5', 68],
  ['Usa500Mar14,M5', 108], ['Ger30Mar14,M5', 102], ['LCrudeMar14,M5', 102],
];

const MetaTraderWindow = () => (
  <MetaWindow>
    <TitleBar $h={30}>
      <AppIcon width={15} height={18} viewBox="0 0 15 18" $m="9px 0 0 3px">
        <path d="M1 8l4 8L14 1 6 10z" fill="#2a3a4a" />
      </AppIcon>
      <MetaTitle>626265: MetaTrader - ActivTrades - Demo Konto - [EURUSD,M15]</MetaTitle>
      <CaptionRow $m="9px 9px 0 0">
        <CaptionButton $w={30} $h={17}><CaptionGlyph kind="min" /></CaptionButton>
        <CaptionButton $w={30} $h={17}><CaptionGlyph kind="max" /></CaptionButton>
        <CaptionButton $w={30} $h={17}><CaptionGlyph kind="close" /></CaptionButton>
      </CaptionRow>
    </TitleBar>
    <MetaBody>
      <MenuRow>
        <CaptionButton $w={18} $h={17}><CaptionGlyph kind="min" dark="#7a8a9a" /></CaptionButton>
        <CaptionButton $w={17} $h={17}><CaptionGlyph kind="restore" dark="#7a8a9a" /></CaptionButton>
        <CaptionButton $w={17} $h={17}><CaptionGlyph kind="close" dark="#8a98a6" /></CaptionButton>
      </MenuRow>
      <MetaToolbar>
        <CutLabel>Indicators</CutLabel>
        <ToolSep $ml={7} $mr={5} />
        <Grip $ml={0} />
        <ToolButton $on><Glyph name="arrow" /></ToolButton>
        <ToolButton><Glyph name="cross" /></ToolButton>
        <ToolSep />
        <ToolButton><Glyph name="vline" /></ToolButton>
        <ToolButton><Glyph name="hline" /></ToolButton>
        <ToolButton><Glyph name="trend" /></ToolButton>
        <ToolButton><Glyph name="fibE" /></ToolButton>
        <ToolButton><Glyph name="fibF" /></ToolButton>
        <ToolButton><LetterTool>A</LetterTool></ToolButton>
        <ToolButton><Glyph name="textBox" /></ToolButton>
        <ToolButton><Glyph name="shapes" /></ToolButton>
        <Caret />
        <ToolSep $ml={3} $mr={3} />
        <Grip $ml={1} $mr={0} />
        <ToolButton><Glyph name="barsTool" /></ToolButton>
        <ToolButton $on><Glyph name="candle" /></ToolButton>
        <ToolButton><Glyph name="line" /></ToolButton>
        <ToolSep $mr={2} />
        <ToolButton><Glyph name="zoomIn" /></ToolButton>
        <ToolButton><Glyph name="zoomOut" /></ToolButton>
        <ToolSep $mr={3} />
        <ToolButton><Glyph name="autoScroll" /></ToolButton>
        <ToolButton $on><Glyph name="shift" /></ToolButton>
        <ToolSep $mr={3} />
        <ToolButton><Glyph name="addIndicator" /></ToolButton>
        <Caret />
        <ToolButton><Glyph name="clock" /></ToolButton>
        <Caret />
        <ToolButton $w={29}><Glyph name="template" /></ToolButton>
        <Caret />
        <ToolSep $ml={3} $mr={2} />
        <Grip $ml={0} $mr={1} />
        {timeframes.map((t) => (
          <Timeframe key={t} $on={t === 'M15'}>{t}</Timeframe>
        ))}
      </MetaToolbar>
      <ChartArea>
        <MainPane />
        <TrendPane />
        <MacdPane />
        <PsarPane />
        <DateAxis />
      </ChartArea>
      <TabRow>
        {symbolTabs.map(([name, w, on], i) => (
          <SymbolTab key={i} $w={w} $on={on}>{name}</SymbolTab>
        ))}
        <TabArrows>
          <TabArrow $left />
          <TabArrow />
        </TabArrows>
      </TabRow>
      <StatusBar>
        <StatusCell $w={635} $first>Für Hilfe F1 drücken</StatusCell>
        <StatusCell $w={116}>Default</StatusCell>
        <StatusCell $w={103}>2014.01.22 14:00</StatusCell>
        <StatusCell $w={71}>O: 1.35711</StatusCell>
        <StatusCell $w={71}>H: 1.35725</StatusCell>
        <StatusCell $w={68}>L: 1.35637</StatusCell>
        <StatusCell $w={70}>C: 1.35645</StatusCell>
        <StatusCell $w={67}>V: 861</StatusCell>
        <StatusCell $w={160}><ConnectionBars />10/0 kb</StatusCell>
      </StatusBar>
    </MetaBody>
  </MetaWindow>
);

const NinjaTraderWindow = () => (
  <NinjaWindow>
    <TitleBar $h={22}>
      <AppIcon width={15} height={15} viewBox="0 0 15 15" $m="2px 0 0 1px">
        <rect x="1" y="3" width="13" height="11" fill="#eef3f8" stroke="#5a7288" />
        <path d="M2 9l3-4 3 3 5-7" fill="none" stroke="#2a9a2a" strokeWidth="1.4" />
        <path d="M2 12l4-2 3 2 4-3" fill="none" stroke="#3468a8" />
      </AppIcon>
      <NinjaTitle>FDAX 03-14 (6 Range)  21.01.2014</NinjaTitle>
      <CaptionRow $m="2px 2px 0 0">
        <LockBox>L</LockBox>
        <CaptionButton $w={31} $h={16}><CaptionGlyph kind="min" /></CaptionButton>
        <CaptionButton $w={31} $h={16}><CaptionGlyph kind="restore" /></CaptionButton>
        <CaptionButton $w={31} $h={16}><CaptionGlyph kind="close" /></CaptionButton>
      </CaptionRow>
    </TitleBar>
    <NinjaToolbar>
      <SmallGrip $ml={1} $w={3} />
      <ThinSep $ml={6} $w={1} />
      <Slot $ml={7} $w={61}>FDAX 03-14</Slot>
      <Caret $ml={6} />
      <Slot $ml={6} $w={44}>6 Range</Slot>
      <Caret $ml={4} />
      <ThinSep $ml={6} $w={1} />
      <Slot $ml={4} $w={16}><Glyph name="ctrlBars" size={16} /></Slot>
      <Caret $ml={1} />
      <Slot $ml={6} $w={16}><Glyph name="pencil" size={16} /></Slot>
      <Caret $ml={1} />
      <Slot $ml={5} $w={16}><Glyph name="zoomPlus" size={16} /></Slot>
      <Slot $ml={7} $w={16}><Glyph name="zoomGrey" size={16} /></Slot>
      <ThinSep $ml={7} $w={1} />
      <Slot $ml={5} $w={16}><Glyph name="crossBlack" size={16} /></Slot>
      <Caret />
      <Slot $ml={6} $w={16}><Glyph name="pageZoom" size={16} /></Slot>
      <ThinSep $ml={7} $w={1} />
      <Slot $ml={5} $w={16}><Glyph name="greyBars" size={16} /></Slot>
      <Slot $ml={7} $w={16}><Glyph name="candles" size={16} /></Slot>
      <Slot $ml={7} $w={16}><Glyph name="lineChart" size={16} /></Slot>
      <Slot $ml={9} $w={16}><Glyph name="dollar" size={16} /></Slot>
      <Slot $ml={6} $w={16}><Glyph name="table" size={16} /></Slot>
    </NinjaToolbar>
    <NinjaMain />
    <NinjaMacd />
    <NinjaTimeAxis />
    <ScrollBar>
      <BarArrow $left />
      <BarThumb />
      <BarArrow />
    </ScrollBar>
  </NinjaWindow>
);

export default function App() {
  return (
    <>
      <GlobalStyle />
      <Page>
        <LeftColumn>
          <MetaTraderWindow />
          <IndicatorDialog />
        </LeftColumn>
        <NinjaTraderWindow />
      </Page>
    </>
  );
}
